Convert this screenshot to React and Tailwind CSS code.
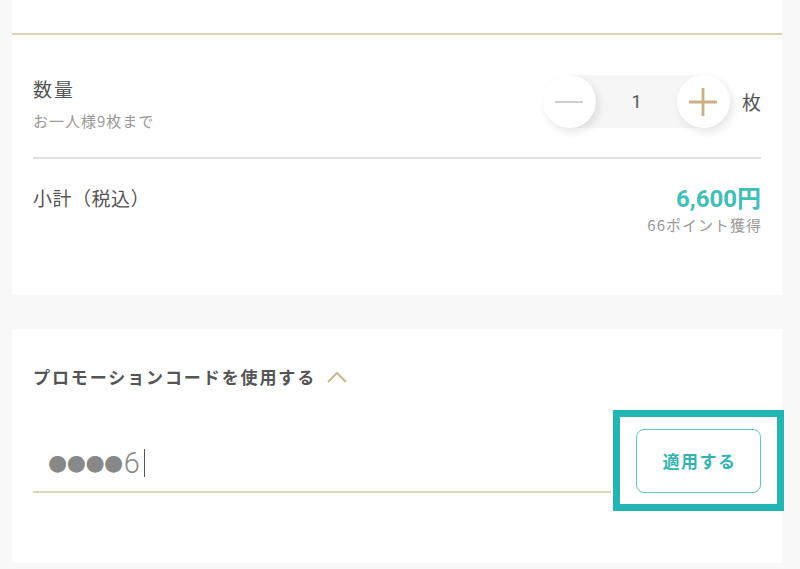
import React from "react";

const font = { fontFamily: '"Noto Sans CJK JP", "Noto Sans", sans-serif' };

export default function App() {
  return (
    <div className="w-[800px] h-[569px] bg-[#f8f8f8] overflow-hidden text-[#555]" style={font}>
      {/* Card 1 */}
      <div className="ml-[12px] w-[770px] bg-white">
        <div className="h-[35px] border-b-2 border-[#ddd0b4]" />
        <div className="px-[21px]">
          <div className="flex justify-between items-start pt-[40px] pb-[26px]">
            <div>
              <div className="text-[19px] leading-[28px] tracking-[2px] text-[#555]">数量</div>
              <div className="mt-[8px] text-[15px] leading-[20px] tracking-[1px] text-[#999]">お一人様9枚まで</div>
            </div>
            <div className="flex items-center">
              <div className="relative flex items-center">
                <div className="absolute left-[27px] right-[27px] top-0 bottom-0 bg-[#f6f6f6]" />
                <button className="relative z-10 w-[53px] h-[53px] rounded-full bg-white shadow-[3px_4px_8px_rgba(0,0,0,0.10)] flex items-center justify-center">
                  <span className="block w-[28px] h-[2px] bg-[#cfcfcf]" />
                </button>
                <div className="relative z-10 w-[81px] text-center text-[18px] leading-[26px] text-[#555]" style={{ fontFamily: '"Roboto", "Noto Sans", sans-serif' }}>1</div>
                <button className="relative z-10 w-[53px] h-[53px] rounded-full bg-white shadow-[3px_4px_8px_rgba(0,0,0,0.10)] flex items-center justify-center">
                  <svg width="30" height="30" viewBox="0 0 30 30">
                    <path d="M15 1 V29 M1 15 H29" stroke="#c9b185" strokeWidth="2.8" />
                  </svg>
                </button>
              </div>
              <span className="ml-[12px] text-[19px] leading-[26px] text-[#555]">枚</span>
            </div>
          </div>
          <div className="h-[2px] bg-[#e0e0e0]" />
          <div className="flex justify-between items-start pt-[25px] h-[136px]">
            <div className="text-[19px] leading-[28px] tracking-[0.5px] text-[#555]">小計（税込）</div>
            <div className="text-right">
              <div className="text-[24px] leading-[30px] font-bold text-[#3fbfb8]" style={{ fontFamily: '"Roboto", "Noto Sans CJK JP", sans-serif' }}>6,600円</div>
              <div className="mt-[1px] text-[15px] leading-[20px] tracking-[1px] mr-[-1px] text-[#999]">66ポイント獲得</div>
            </div>
          </div>
        </div>
      </div>

      {/* Card 2 */}
      <div className="ml-[12px] mt-[34px] w-[770px] h-[234px] bg-white px-[21px] pt-[35px]">
        <div className="flex items-center">
          <span className="text-[17px] leading-[26px] font-bold tracking-[1.9px] text-[#555]">プロモーションコードを使用する</span>
          <svg className="ml-[10px]" width="22" height="14" viewBox="0 0 22 14">
            <path d="M2 12 L11 3 L20 12" fill="none" stroke="#cbb88f" strokeWidth="2" />
          </svg>
        </div>
        <div className="flex items-end mt-[39px]">
          <div className="flex-1 mr-[25px] border-b-2 border-[#e4d6bd] pl-[15px] pb-[13px] flex items-center">
            <span className="text-[22px] leading-[30px] text-[#888] tracking-[-0.5px]" style={{ fontFamily: '"DejaVu Sans", sans-serif' }}>●●●●</span>
            <span className="ml-[1px] text-[29px] leading-[30px] text-[#888]" style={{ fontFamily: '"Roboto", sans-serif', fontWeight: 300 }}>6</span>
            <span className="ml-[4px] w-[1px] h-[28px] bg-[#555]" />
          </div>
          <div className="relative">
            <button className="w-[125px] h-[64px] rounded-[8px] border-[1.5px] border-[#5ccac6] bg-white text-[17px] font-bold tracking-[1.5px] pl-[2px] text-[#34b4b1]">
              適用する
            </button>
            <div className="absolute left-[-23px] right-[-23px] top-[-19px] bottom-[-18px] border-[7px] border-[#23b5b3] pointer-events-none" />
          </div>
        </div>
      </div>
    </div>
  );
}
